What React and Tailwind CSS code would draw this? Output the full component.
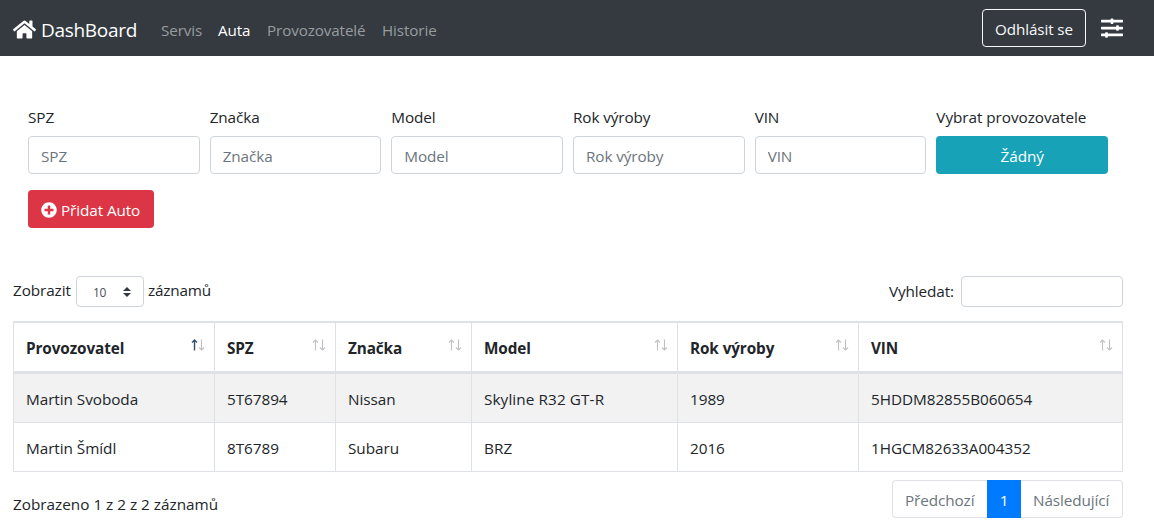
import { FaHome, FaPlusCircle, FaSlidersH } from "react-icons/fa";

const fields = ["SPZ", "Značka", "Model", "Rok výroby", "VIN"];

const headers = ["Provozovatel", "SPZ", "Značka", "Model", "Rok výroby", "VIN"];

const rows = [
  ["Martin Svoboda", "5T67894", "Nissan", "Skyline R32 GT-R", "1989", "5HDDM82855B060654"],
  ["Martin Šmídl", "8T6789", "Subaru", "BRZ", "2016", "1HGCM82633A004352"],
];

function SortArrows({ active }) {
  return (
    <svg className="mt-4 h-3 w-[14px] shrink-0" viewBox="0 0 14 12" fill="none">
      <path d="M3.5 11.5V1M1 3.5L3.5 1L6 3.5" stroke={active ? "#31506b" : "#c4c2c4"} strokeWidth={active ? 1.4 : 1.1} />
      <path d="M10.5 0.5V11M8 8.5L10.5 11L13 8.5" stroke="#c0c0c4" strokeWidth="1.1" />
    </svg>
  );
}

export default function App() {
  return (
    <div className="h-[524px] w-[1154px] overflow-hidden bg-white font-['Open_Sans','Noto_Sans',sans-serif] text-[15.3px] leading-6 tracking-[-0.1px] text-[#212529]">
      <nav className="flex h-14 items-center bg-[#343a40] pl-[13px] pr-[31px]">
        <a className="flex w-[148px] items-center gap-[5px] text-[19px] tracking-[-0.3px] text-white">
          <FaHome className="mt-[3px] h-[23px] w-[23px]" />
          <span className="pt-[3px]">DashBoard</span>
        </a>
        <div className="flex grow pt-[3px] text-[15.2px] text-[#999c9f]">
          <a className="w-[57px]">Servis</a>
          <a className="w-[49px] text-white">Auta</a>
          <a className="w-[115px]">Provozovatelé</a>
          <a>Historie</a>
        </div>
        <button className="mr-[15px] flex h-[38px] w-[104px] items-center justify-center rounded border border-[#f8f9fa] pt-0.5 text-[15.2px] tracking-[-0.1px] text-[#f8f9fa]">
          Odhlásit se
        </button>
        <FaSlidersH className="h-[22px] w-[22px] text-white" />
      </nav>

      <form className="px-7 pt-[49px]">
        <div className="grid w-[1080px] grid-cols-6 gap-[10px]">
          {fields.map((f) => (
            <label key={f} className="flex flex-col gap-[7px]">
              <span>{f}</span>
              <input
                placeholder={f}
                className="h-[38px] w-full rounded border border-[#ced4da] px-3 pt-0.5 placeholder:text-[#6c757d]"
              />
            </label>
          ))}
          <div className="flex flex-col gap-[7px]">
            <span className="tracking-[-0.05px]">Vybrat provozovatele</span>
            <button type="button" className="h-[38px] rounded bg-[#17a2b8] pt-0.5 text-white">Žádný</button>
          </div>
        </div>
        <button type="button" className="mt-4 flex h-[38px] w-[126px] items-center gap-1 rounded bg-[#dc3545] pl-[13px] text-white">
          <FaPlusCircle className="mt-0.5 h-4 w-4 shrink-0" />
          <span className="whitespace-nowrap pt-0.5">Přidat Auto</span>
        </button>
      </form>

      <section className="w-[1123px] pl-[13px] pt-12">
        <div className="flex h-[31px] items-center">
          <span className="w-[63px] pb-[3px]">Zobrazit</span>
          <div className="flex h-[31px] w-[68px] items-center rounded border border-[#ced4da] pl-4 pr-3">
            <span className="grow pt-0.5 text-xs tracking-[-0.4px] text-[#495057]">10</span>
            <svg className="h-[10px] w-2" viewBox="0 0 8 10" fill="#343a40">
              <path d="M4 0L8 4H0zM4 10L0 6H8z" />
            </svg>
          </div>
          <span className="ml-1 grow pb-[3px] tracking-[-0.2px]">záznamů</span>
          <span className="mr-[7px] pb-px">Vyhledat:</span>
          <input className="h-[31px] w-[162px] rounded border border-[#ced4da] px-2" />
        </div>

        <div className="mt-[14px] border-r border-[#dee2e6]">
          <div className="grid h-[53px] grid-cols-[201px_121px_136px_206px_181px_264px] border-b-3 border-t-2 border-[#dee2e6] font-bold">
            {headers.map((h, i) => (
              <div key={h} className="flex justify-between border-l border-[#dee2e6] pl-3 pr-[9px]">
                <span className="pt-[13px]">{h}</span>
                <SortArrows active={i === 0} />
              </div>
            ))}
          </div>
          {rows.map((r) => (
            <div
              key={r[1]}
              className="grid h-[49px] grid-cols-[201px_121px_136px_206px_181px_264px] border-b border-[#dee2e6] odd:bg-white even:bg-[#f2f2f2]"
            >
              {r.map((c, i) => (
                <div
                  key={c}
                  className={
                    i === 3
                      ? "border-l border-[#dee2e6] pl-3 pt-[13px] tracking-[0.1px]"
                      : "border-l border-[#dee2e6] pl-3 pt-[13px] tracking-[-0.05px]"
                  }
                >
                  {c}
                </div>
              ))}
            </div>
          ))}
        </div>

        <div className="flex justify-between pt-2">
          <span className="pt-3 tracking-[0px]">Zobrazeno 1 z 2 z 2 záznamů</span>
          <div className="flex h-[38px] text-[#6c757d]">
            <span className="w-[95px] rounded-l border border-r-0 border-[#dee2e6] pl-3 pt-[7px]">Předchozí</span>
            <span className="w-[34px] bg-[#007bff] pt-2 text-center text-white">1</span>
            <span className="w-[102px] rounded-r border border-l-0 border-[#dee2e6] pl-3 pt-[7px]">Následující</span>
          </div>
        </div>
      </section>
    </div>
  );
}
